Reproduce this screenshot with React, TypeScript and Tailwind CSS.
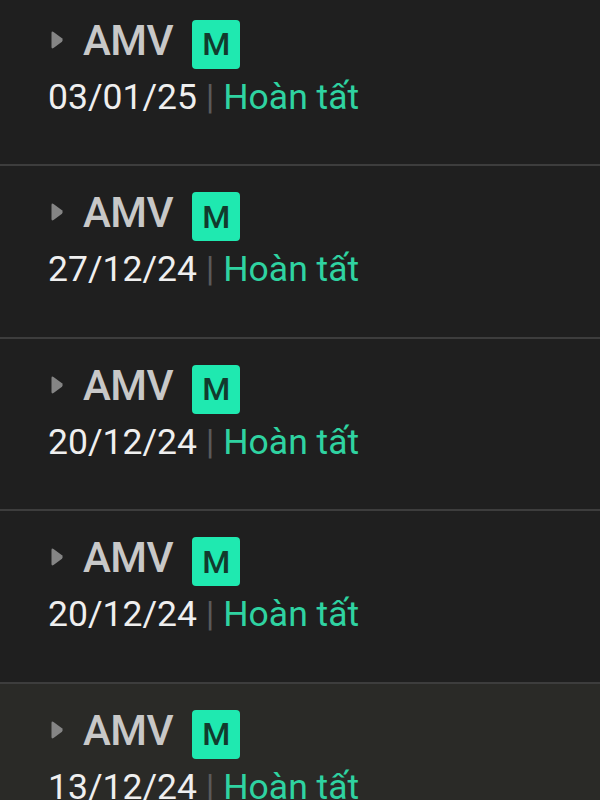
const rows = [
  { date: "03/01/25", active: false },
  { date: "27/12/24", active: false },
  { date: "20/12/24", active: false },
  { date: "20/12/24", active: false },
  { date: "13/12/24", active: true },
];

function Row({ date, active }: { date: string; active: boolean }) {
  return (
    <div
      className={
        "h-[172.5px] border-b-2 pl-[48px] pt-[25px] " +
        (active ? "bg-[#2a2a27] border-[#3a3a37]" : "bg-[#1f1f1f] border-[#3d3d3d]")
      }
    >
      <div className="flex items-start h-[50px]">
        <svg width="14" height="20" viewBox="0 0 14 20" className="mt-[11px] ml-[2px]">
          <path d="M3.5 2 L12 8.3 Q13.5 10 12 11.7 L3.5 18 Q1.5 19.3 1.5 17 L1.5 3 Q1.5 0.7 3.5 2 Z" fill="#858585" />
        </svg>
        <span className="ml-[19px] mt-[1px] text-[42px] leading-none font-medium text-[#c8c8c8] tracking-[-0.5px]">
          AMV
        </span>
        <span className="ml-[19px] mt-[1px] w-[48px] h-[49px] rounded-[4px] bg-[#1fe9b0] flex items-center justify-center text-[32px] font-medium text-[#123a2d] leading-none">
          M
        </span>
      </div>
      <div className="mt-[11px] text-[35.5px] leading-none whitespace-pre">
        <span className="text-[#efefef]">{date}</span>
        <span className="text-[#5a5a5a]"> | </span>
        <span className="text-[#2fd3a1]">Hoàn tất</span>
      </div>
    </div>
  );
}

export default function App() {
  return (
    <div className="w-[600px] h-[800px] overflow-hidden bg-[#1f1f1f] font-['Roboto',sans-serif]">
      <div className="-mt-[6.5px]">
        {rows.map((r, i) => (
          <Row key={i} date={r.date} active={r.active} />
        ))}
      </div>
    </div>
  );
}
